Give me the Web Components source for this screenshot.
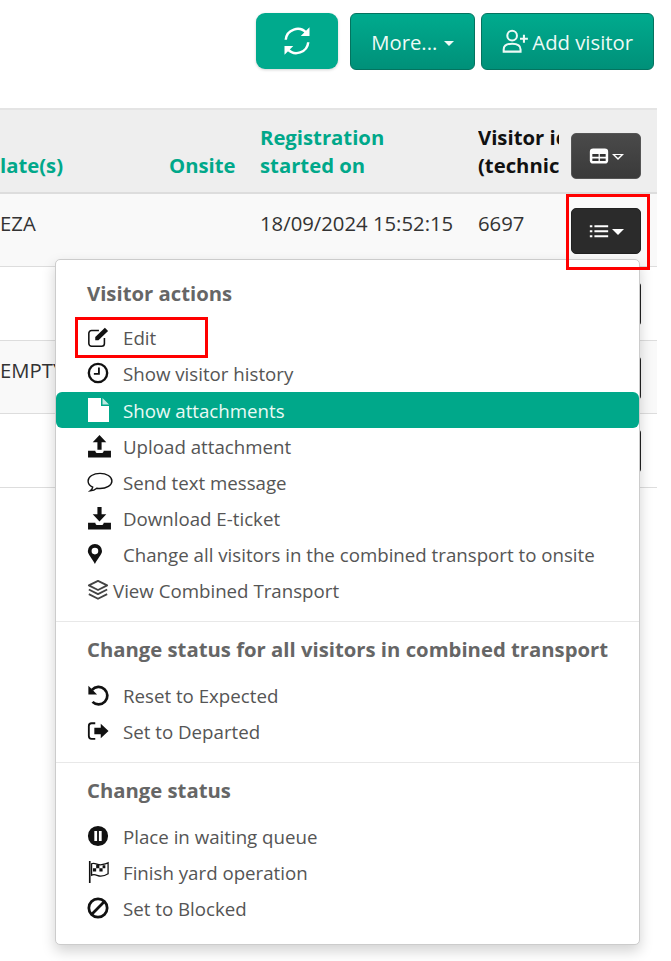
<!DOCTYPE html>
<html lang="en">
<head>
<meta charset="utf-8">
<title>Visitors</title>
<style>
  html, body { margin: 0; height: 100%; background: #fff; overflow: hidden; }
  body { font-family: "Open Sans", "Liberation Sans", sans-serif; color: #333; }
</style>
</head>
<body>
<visitor-page>
  <page-toolbar slot="toolbar">
    <teal-button flat icon="refresh"></teal-button>
    <teal-button icon="none" caret>More...</teal-button>
    <teal-button icon="userplus">Add visitor</teal-button>
  </page-toolbar>
  <visitor-table slot="table">
    <table-head></table-head>
    <visitor-row plate="EZA" started="18/09/2024 15:52:15" visitor="6697" striped></visitor-row>
    <visitor-row></visitor-row>
    <visitor-row plate="EMPTY" striped></visitor-row>
    <visitor-row></visitor-row>
  </visitor-table>
  <action-menu slot="menu">
    <menu-group label="Visitor actions" first>
      <menu-item icon="edit">Edit</menu-item>
      <menu-item icon="clock">Show visitor history</menu-item>
      <menu-item icon="file" active>Show attachments</menu-item>
      <menu-item icon="upload">Upload attachment</menu-item>
      <menu-item icon="comment">Send text message</menu-item>
      <menu-item icon="download">Download E-ticket</menu-item>
      <menu-item icon="marker">Change all visitors in the combined transport to onsite</menu-item>
      <menu-item icon="layers" tight>View Combined Transport</menu-item>
    </menu-group>
    <menu-group label="Change status for all visitors in combined transport">
      <menu-item icon="undo">Reset to Expected</menu-item>
      <menu-item icon="share">Set to Departed</menu-item>
    </menu-group>
    <menu-group label="Change status">
      <menu-item icon="pause">Place in waiting queue</menu-item>
      <menu-item icon="flag">Finish yard operation</menu-item>
      <menu-item icon="ban">Set to Blocked</menu-item>
    </menu-group>
  </action-menu>
</visitor-page>

<script>
const ICONS = {
  none: '',
  refresh: `<path d="M3 11A9.5 9.5 0 0 1 19.500 5.500M21 13A9.500 9.500 0 0 1 4.500 18.500" fill="none" stroke="currentColor" stroke-width="2"/><path d="M22 1v7h-7zM2 23v-7h7z" fill="currentColor"/>`,
  userplus: `<path d="M9 2.500a4.300 4.300 0 1 1 0 8.600 4.300 4.300 0 0 1 0-8.600zM1.500 21v-2c0-3.500 3-5 7.500-5s7.500 1.500 7.500 5v2z" fill="none" stroke="currentColor" stroke-width="1.800"/><path d="M19.500 6v7M16 9.500h7" fill="none" stroke="currentColor" stroke-width="1.800"/>`,
  edit: `<path d="M19 13v6a3 3 0 0 1-3 3H5a3 3 0 0 1-3-3V8a3 3 0 0 1 3-3h8" fill="none" stroke="currentColor" stroke-width="1.700"/><path d="M9 12 19.500 2l3.500 3.500L12.500 15.500H9z" fill="currentColor"/>`,
  clock: `<circle cx="12" cy="12" r="10" fill="none" stroke="currentColor" stroke-width="2.600"/><path d="M13 6v7H7.500" fill="none" stroke="currentColor" stroke-width="2"/>`,
  file: `<path d="M1 0H14v8h8v16H1z" fill="currentColor"/><path d="M15.500 0 22 6.500h-6.500z" fill="currentColor" opacity=".75"/>`,
  upload: `<path d="M12 1l6.500 7H14v7h-4V8H5.500z" fill="currentColor"/><path d="M1 16h7c0 1.500 1 2.300 2 2.300h4c1 0 2-.8 2-2.300h7v6.500H1z" fill="currentColor"/>`,
  comment: `<path d="M12 4C6 4 1 7 1 11c0 2.500 1.700 4.500 4.300 5.800-.3 1.400-1.200 2.600-2.300 3.400 2.300-.2 4.400-1 6-2.400.8.1 2 .2 3 .2 6 0 11-3 11-7S18 4 12 4z" fill="none" stroke="currentColor" stroke-width="1.300"/>`,
  download: `<path d="M10 1h4v7h4.500L12 15 5.500 8H10z" fill="currentColor"/><path d="M1 16h7c0 1.500 1 2.300 2 2.300h4c1 0 2-.8 2-2.300h7v6.500H1z" fill="currentColor"/>`,
  marker: `<path fill-rule="evenodd" transform="translate(-2.500 0)" d="M12 0a8.500 8.500 0 0 0-8.500 8.500c0 4.500 5.500 9 8.500 15.500 3-6.500 8.500-11 8.500-15.500A8.500 8.500 0 0 0 12 0zm0 12.500a4 4 0 1 1 0-8 4 4 0 0 1 0 8z" fill="currentColor"/>`,
  layers: `<path d="M12 2 22 7 12 12 2 7zM2 11.500l10 5 10-5M2 16.500l10 5 10-5" fill="none" stroke="currentColor" stroke-width="2" stroke-linejoin="round"/>`,
  undo: `<path d="M5.500 6.500A9.500 9.500 0 1 1 6 19.500" fill="none" stroke="currentColor" stroke-width="3"/><path d="M1.500 2v9.500H11z" fill="currentColor"/>`,
  share: `<path d="M9 3.500H5a3 3 0 0 0-3 3v11a3 3 0 0 0 3 3h4" fill="none" stroke="currentColor" stroke-width="2"/><path d="M8 8.500h7V4l8.500 8-8.500 8v-4.500H8z" fill="currentColor"/>`,
  pause: `<path fill-rule="evenodd" d="M12 1a11 11 0 1 1 0 22 11 11 0 0 1 0-22zM8 6.500v11h3v-11zM13 6.500v11h3v-11z" fill="currentColor"/>`,
  flag: `<path d="M3 0v24" fill="none" stroke="currentColor" stroke-width="1.800"/><path d="M5 3c4-1.500 7 2 11 1 3-.5 5-1 7-2v12c-3 2-5 2.500-8 2.500-4 0-6-3-10-1z" fill="none" stroke="currentColor" stroke-width="1.400"/><path d="M10 4h3.500v4H17V4.500h3V8h-3v3.500h-3.500V8H10v3.500H6.500V8H10z" fill="currentColor"/>`,
  ban: `<circle cx="12" cy="12" r="10" fill="none" stroke="currentColor" stroke-width="3"/><path d="M5 19 19 5" fill="none" stroke="currentColor" stroke-width="3"/>`,
  table: `<rect x="1" y="3" width="22" height="18" rx="4" fill="currentColor"/><path d="M4 9.500h7.500V13H4zM13 9.500h7V13h-7zM4 15h7.500v3H4zM13 15h7v3h-7z" fill="#333"/>`,
  list: `<path d="M1 5h3v2.500H1zM1 11h3v2.500H1zM1 17h3v2.500H1zM6.500 5H23v2.500H6.500zM6.500 11H23v2.500H6.500zM6.500 17H23v2.500H6.500z" fill="currentColor"/>`
};

const ICON_SIZES = { upload: 25, download: 25, comment: 26, file: 24, marker: 20 };

function svgIcon(name, size) {
  return `<svg viewBox="0 0 24 24" width="${size}" height="${size}" aria-hidden="true">${ICONS[name]}</svg>`;
}

function makeTemplate(html) {
  const t = document.createElement("template");
  t.innerHTML = html;
  return t;
}

class ShadowBase extends HTMLElement {
  constructor(template) {
    super();
    this.attachShadow({ mode: "open" });
    this.shadowRoot.appendChild(template.content.cloneNode(true));
  }
}

const pageTemplate = makeTemplate(`
  <style>
  :host { display: block; position: relative; height: 961px; overflow: hidden; }
  .menu { position: absolute; left: 55px; top: 259px; }
  .mark { position: absolute; border: 3px solid #f00; box-sizing: border-box; pointer-events: none; }
  .mark--row { left: 566px; top: 194px; width: 84px; height: 76px; }
  .mark--edit { left: 75px; top: 317px; width: 133px; height: 41px; }
  </style>
  <slot name="toolbar"></slot>
  <slot name="table"></slot>
  <div class="menu"><slot name="menu"></slot></div>
  <div class="mark mark--row"></div>
  <div class="mark mark--edit"></div>
`);
class VisitorPage extends ShadowBase {
  constructor() { super(pageTemplate); }
}

const toolbarTemplate = makeTemplate(`
  <style>
  :host { display: flex; justify-content: flex-end; gap: 6px; padding: 13px 17px 0 0; height: 108px; box-sizing: border-box; }
  ::slotted([flat]) { margin-right: 6px; }
  </style>
  <slot></slot>
`);
class PageToolbar extends ShadowBase {
  constructor() { super(toolbarTemplate); }
}

const buttonTemplate = makeTemplate(`
  <style>
  :host { display: inline-flex; align-items: center; justify-content: center; box-sizing: border-box; height: 57px; padding: 0 20px; color: #eefaf6; font-size: 20.300px; border: 1px solid #04735f; border-radius: 6px; background: linear-gradient(#00ab8e, #009079); }
  :host([flat]) { width: 82px; height: 56px; padding: 0; border: 0; border-radius: 9px; background: #00aa8d; box-shadow: 0 1px 3px rgba(0,0,0,.18); color: #fff; }
  svg { display: block; }
  .ico { margin-right: 3px; }
  :host([flat]) .ico { margin: 0; }
  .ico:empty { display: none; }
  .caret { width: 0; height: 0; margin-left: 7px; margin-top: 3px; border: 5.500px solid transparent; border-top-color: currentColor; border-bottom: 0; }
  </style>
  <span class="ico"></span><slot></slot><span class="caret"></span>
`);
class TealButton extends ShadowBase {
  constructor() { super(buttonTemplate); }
  connectedCallback() {
    const icon = this.getAttribute("icon");
    const size = this.hasAttribute("flat") ? 30 : 27;
    this.shadowRoot.querySelector(".ico").innerHTML = icon === "none" ? "" : svgIcon(icon, size);
    if (!this.hasAttribute("caret")) this.shadowRoot.querySelector(".caret").remove();
  }
}

const tableTemplate = makeTemplate(`
  <style>
  :host { display: block; width: 657px; }
  </style>
  <slot></slot>
`);
class VisitorTable extends ShadowBase {
  constructor() { super(tableTemplate); }
}

const darkButtonTemplate = makeTemplate(`
  <style>
  :host { display: flex; align-items: center; justify-content: center; gap: 3px; width: 70px; height: 46px; box-sizing: border-box; border: 1px solid #222; border-radius: 5px; background: #2b2b2b; color: #fff; }
  :host([light]) { background: linear-gradient(#4a4a4a, #3a3a3a); border-color: #555; }
  svg { display: block; }
  .caret { position: relative; width: 0; height: 0; margin-top: 2px; border: 6px solid transparent; border-top-color: #fff; border-bottom: 0; }
  :host([light]) .caret::after { content: ""; position: absolute; left: -3px; top: -5px; border: 3px solid transparent; border-top-color: #444; border-bottom: 0; }
  </style>
  <span class="ico"></span><span class="caret"></span>
`);
class DarkButton extends ShadowBase {
  constructor() { super(darkButtonTemplate); }
  connectedCallback() {
    this.shadowRoot.querySelector(".ico").innerHTML = svgIcon(this.getAttribute("icon"), 20);
  }
}

const headTemplate = makeTemplate(`
  <style>
  :host { display: grid; grid-template-columns: 169px 91px 218px 81px 82px; height: 86px; box-sizing: border-box; background: #eee; border-top: 2px solid #e4e4e4; border-bottom: 2px solid #ddd; font-size: 20.300px; font-weight: 700; line-height: 28px; color: #00a88a; }
  div { align-self: end; padding-bottom: 13px; white-space: nowrap; }
  .clip { color: #111; overflow: hidden; }
  .tool { padding: 0 0 13px 12px; }
  </style>
  <div>late(s)</div>
  <div>Onsite</div>
  <div>Registration<br>started on</div>
  <div class="clip">Visitor id<br>(technical id)</div>
  <div class="tool"><dark-button light icon="table"></dark-button></div>
`);
class TableHead extends ShadowBase {
  constructor() { super(headTemplate); }
}

const rowTemplate = makeTemplate(`
  <style>
  :host { display: grid; grid-template-columns: 169px 91px 218px 81px 82px; height: 73.400px; box-sizing: border-box; border-bottom: 1px solid #ddd; font-size: 20.300px; line-height: 28px; color: #333; }
  :host([striped]) { background: #f9f9f9; }
  div { padding-top: 15px; white-space: nowrap; }
  .tool { padding: 14px 0 0 12px; }
  </style>
  <div class="plate"></div>
  <div></div>
  <div class="started"></div>
  <div class="visitor"></div>
  <div class="tool"><dark-button icon="list"></dark-button></div>
`);
class VisitorRow extends ShadowBase {
  constructor() { super(rowTemplate); }
  connectedCallback() {
    this.shadowRoot.querySelector(".plate").textContent = this.getAttribute("plate") || "";
    this.shadowRoot.querySelector(".started").textContent = this.getAttribute("started") || "";
    this.shadowRoot.querySelector(".visitor").textContent = this.getAttribute("visitor") || "";
  }
}

const menuTemplate = makeTemplate(`
  <style>
  :host { display: block; width: 585px; height: 686px; box-sizing: border-box; background: #fff; border: 1px solid #ccc; border-radius: 5px; box-shadow: 0 6px 14px rgba(0,0,0,.18); }
  </style>
  <slot></slot>
`);
class ActionMenu extends ShadowBase {
  constructor() { super(menuTemplate); }
}

const groupTemplate = makeTemplate(`
  <style>
  :host { display: block; border-top: 1px solid #e8e8e8; padding-bottom: 13px; }
  :host([first]) { border-top: 0; }
  h2 { margin: 0; height: 55px; padding-left: 31px; font-size: 20.300px; font-weight: 700; line-height: 55px; color: #666; white-space: nowrap; }
  :host([first]) h2 { height: 59px; line-height: 66px; }
  </style>
  <h2></h2>
  <slot></slot>
`);
class MenuGroup extends ShadowBase {
  constructor() { super(groupTemplate); }
  connectedCallback() {
    this.shadowRoot.querySelector("h2").textContent = this.getAttribute("label");
  }
}

const itemTemplate = makeTemplate(`
  <style>
  :host { display: flex; align-items: center; height: 36px; padding-left: 31px; font-size: 18.700px; color: #555; white-space: nowrap; }
  :host([active]) { margin-top: 1px; background: #00a88a; color: #eafaf5; border-radius: 6px; }
  .ico { flex: none; width: 36px; color: #111; line-height: 0; }
  :host([tight]) .ico { width: 26px; color: #444; }
  :host([active]) .ico { color: #fff; }
  svg { display: block; }
  </style>
  <span class="ico"></span><slot></slot>
`);
class MenuItem extends ShadowBase {
  constructor() { super(itemTemplate); }
  connectedCallback() {
    const icon = this.getAttribute("icon");
    this.shadowRoot.querySelector(".ico").innerHTML = svgIcon(icon, ICON_SIZES[icon] || 22);
  }
}

customElements.define("visitor-page", VisitorPage);
customElements.define("page-toolbar", PageToolbar);
customElements.define("teal-button", TealButton);
customElements.define("visitor-table", VisitorTable);
customElements.define("dark-button", DarkButton);
customElements.define("table-head", TableHead);
customElements.define("visitor-row", VisitorRow);
customElements.define("action-menu", ActionMenu);
customElements.define("menu-group", MenuGroup);
customElements.define("menu-item", MenuItem);
</script>
</body>
</html>
